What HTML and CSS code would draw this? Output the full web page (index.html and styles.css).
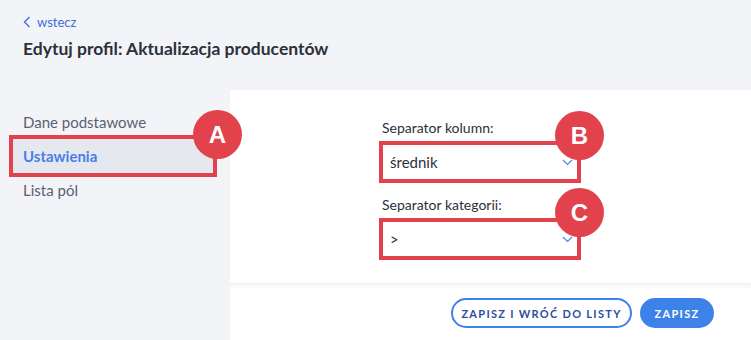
FILE: index.html
```html
<!DOCTYPE html>
<html lang="pl">
<head>
<meta charset="utf-8">
<link rel="stylesheet" href="styles.css">
</head>
<body>
<header class="top">
  <a class="back" href="#"><svg class="back-ico" width="8" height="12" viewBox="0 0 8 12"><path d="M6.5 1 L1.5 6 L6.5 11" fill="none" stroke="#3b6fd8" stroke-width="1.4"/></svg>wstecz</a>
  <h1 class="title">Edytuj profil: Aktualizacja producentów</h1>
</header>
<main class="layout">
  <nav class="side">
    <a class="nav-item" href="#">Dane podstawowe</a>
    <a class="nav-item active annot" href="#">Ustawienia<span class="badge badge-a">A</span></a>
    <a class="nav-item" href="#">Lista pól</a>
  </nav>
  <section class="content">
    <div class="panel">
      <div class="form">
        <label class="lbl">Separator kolumn:</label>
        <div class="select annot"><span>średnik</span><svg class="chev" width="11" height="7" viewBox="0 0 11 7"><path d="M1 1 L5.5 5.5 L10 1" fill="none" stroke="#4a86e8" stroke-width="1.2"/></svg><span class="badge badge-b">B</span></div>
        <label class="lbl lbl2">Separator kategorii:</label>
        <div class="select annot"><span>&gt;</span><svg class="chev" width="11" height="7" viewBox="0 0 11 7"><path d="M1 1 L5.5 5.5 L10 1" fill="none" stroke="#4a86e8" stroke-width="1.2"/></svg><span class="badge badge-c">C</span></div>
      </div>
    </div>
    <footer class="foot">
      <button class="btn btn-outline">ZAPISZ I WRÓĆ DO LISTY</button>
      <button class="btn btn-fill">ZAPISZ</button>
    </footer>
  </section>
</main>
</body>
</html>
```

FILE: styles.css
```css
* { box-sizing: border-box; }
html, body { margin: 0; }
body {
  width: 751px;
  height: 340px;
  overflow: hidden;
  background: #f3f4f8;
  font-family: "Source Sans Pro", "Lato", "Noto Sans", sans-serif;
  color: #2b303b;
}
.top {
  height: 90px;
  padding: 14px 0 0 23px;
}
.back {
  display: flex;
  align-items: center;
  gap: 6px;
  color: #3b6fd8;
  text-decoration: none;
  font-size: 13px;
  line-height: 16px;
}
.back-ico { display: block; }
.title {
  margin: 7px 0 0;
  font-size: 17.5px;
  font-weight: 700;
  line-height: 24px;
  color: #2b303b;
}
.layout {
  display: grid;
  grid-template-columns: 230px 521px;
  height: 250px;
}
.side {
  padding-top: 15px;
  display: flex;
  flex-direction: column;
}
.nav-item {
  position: relative;
  display: flex;
  align-items: center;
  height: 34px;
  width: 200px;
  margin-left: 13px;
  padding-left: 10px;
  font-size: 15px;
  color: #5b6170;
  text-decoration: none;
}
.nav-item.active {
  background: #e6e8f0;
  color: #4a7de8;
  font-weight: 700;
}
.annot { outline: 4px solid #e2424b; }
.badge {
  position: absolute;
  width: 49px;
  height: 49px;
  border-radius: 50%;
  background: #e2424b;
  color: #fff;
  font-family: "Liberation Sans", Arial, sans-serif;
  font-weight: 700;
  font-size: 24px;
  display: flex;
  align-items: center;
  justify-content: center;
  z-index: 2;
}
.badge-a { left: 180px; top: -29px; }
.badge-b, .badge-c { left: 172px; top: -34px; }
.content {
  display: flex;
  flex-direction: column;
}
.panel {
  background: #fff;
  height: 193px;
  padding: 29px 0 0 153px;
}
.form {
  width: 194px;
  display: flex;
  flex-direction: column;
}
.lbl {
  font-size: 14px;
  line-height: 18px;
  color: #2b303b;
  margin-left: -1px;
}
.lbl2 { margin-top: 17px; }
.select {
  position: relative;
  margin-top: 8px;
  height: 34px;
  background: #fff;
  display: flex;
  align-items: center;
  padding: 0 0 0 7px;
  font-size: 15px;
  color: #2b303b;
}
.chev {
  position: absolute;
  right: 4px;
  top: 14px;
}
.foot {
  flex: 1;
  background: #fff;
  box-shadow: inset 0 4px 4px -2px rgba(0,0,0,0.05);
  border-top: 1px solid #f3f3f5;
  display: flex;
  justify-content: flex-end;
  align-items: center;
  gap: 8px;
  padding: 2px 37px 0 0;
}
.btn {
  height: 30px;
  border-radius: 15px;
  font-family: inherit;
  font-size: 11px;
  font-weight: 700;
  letter-spacing: 1.3px;
  padding: 0;
  white-space: nowrap;
  cursor: pointer;
}
.btn-outline {
  width: 181px;
  background: #fff;
  border: 2px solid #3d82e8;
  color: #2d4da0;
}
.btn-fill {
  width: 74px;
  background: #3d82e8;
  border: none;
  color: #fff;
}
```
